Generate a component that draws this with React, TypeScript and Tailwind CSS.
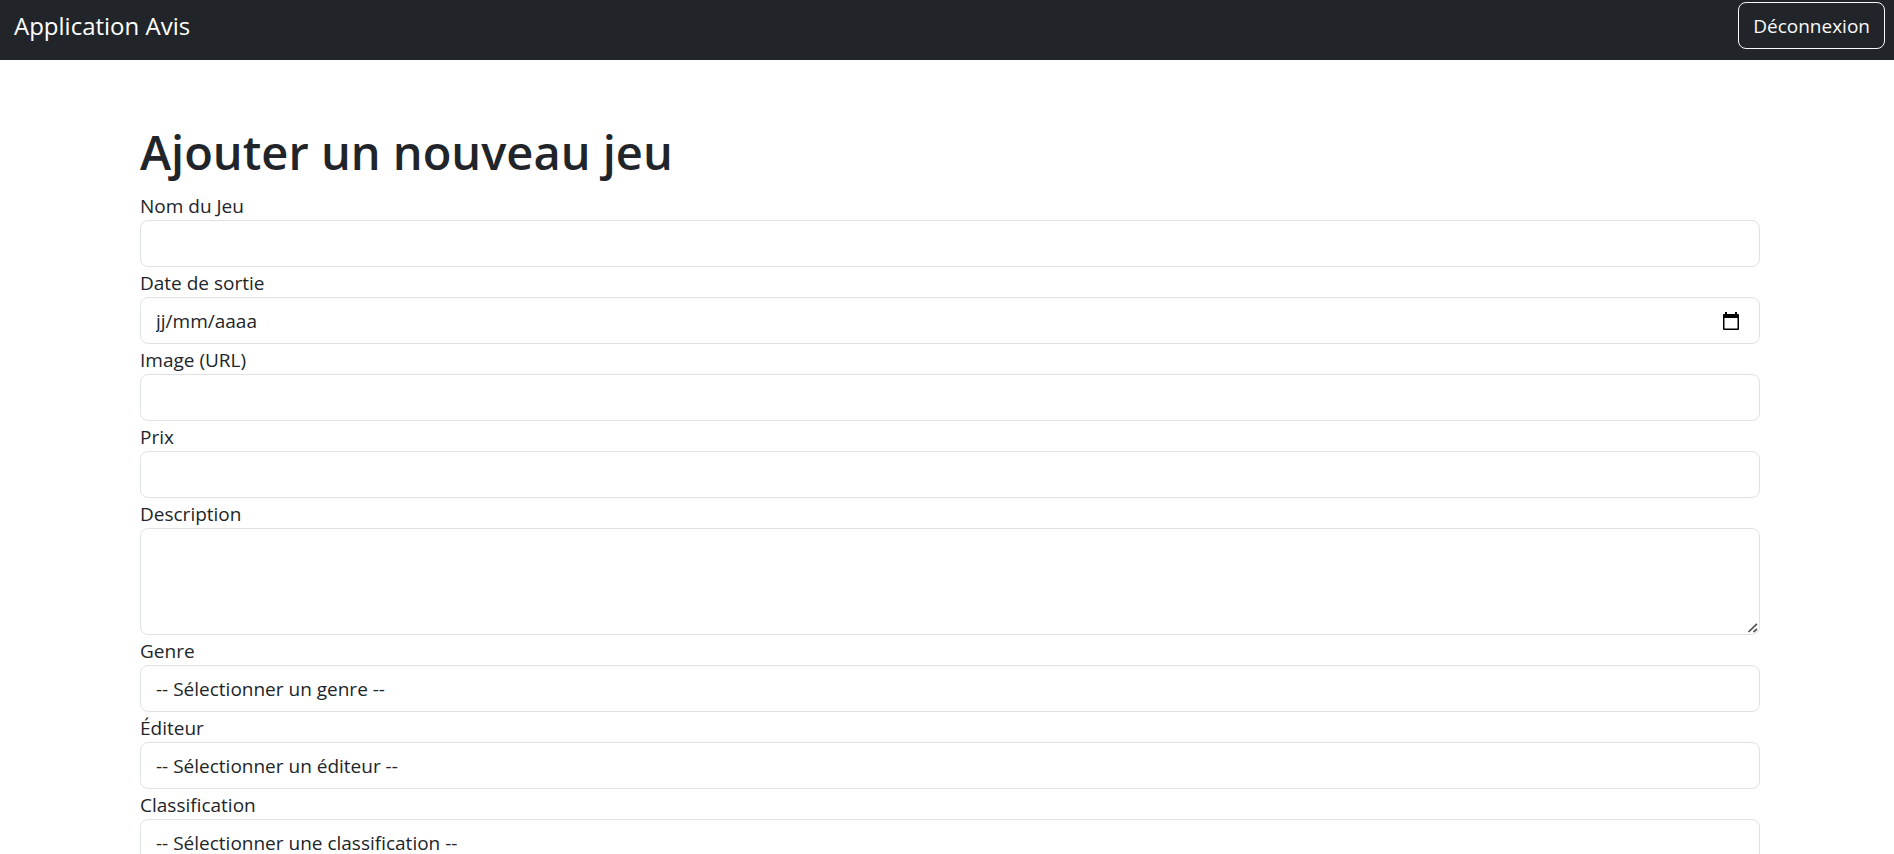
import { useRef, type ReactNode } from "react";

const control =
  "block w-full h-[47px] rounded-lg border border-[#dee2e6] bg-white px-[15px] pt-0.5 text-[19px] text-[#212529]";

function Field({ id, label, children }: { id: string; label: string; children: ReactNode }) {
  return (
    <div>
      <label htmlFor={id} className="block w-fit pt-0.5 text-[19px] leading-[28px]">
        {label}
      </label>
      {children}
    </div>
  );
}

function DateField() {
  const input = useRef<HTMLInputElement>(null);
  return (
    <div className="flex h-[47px] items-center rounded-lg border border-[#dee2e6] pl-[15px] pr-[20px]">
      <input
        ref={input}
        id="date"
        type="text"
        placeholder="jj/mm/aaaa"
        className="min-w-0 grow pt-0.5 text-[19px] outline-none placeholder:text-[#212529]"
      />
      <button type="button" aria-label="Choisir une date" onClick={() => input.current?.focus()}>
        <svg width="16" height="18" viewBox="0 0 16 18" fill="none" className="block">
          <path d="M2 0h2v2h8V0h2v2h1q1 0 1 1v14q0 1-1 1H1q-1 0-1-1V3q0-1 1-1h1zM1.5 6v10.5h13V6z" fill="#000" fillRule="evenodd" />
        </svg>
      </button>
    </div>
  );
}

function Choice({ id, text }: { id: string; text: string }) {
  return (
    <select id={id} className={`${control} appearance-none`} defaultValue="">
      <option value="">{text}</option>
    </select>
  );
}

export default function App() {
  return (
    <div className="h-screen overflow-x-hidden overflow-y-auto bg-white font-['Open_Sans','Noto_Sans',sans-serif] text-[#212529] [scrollbar-width:none]">
      <nav className="flex items-start justify-between bg-[#212529] pb-[10px] pl-[14px] pr-[9px] pt-0.5 text-white">
        <a href="#" className="text-2xl leading-[48px]">
          Application Avis
        </a>
        <button type="button" className="h-[47px] rounded-lg border border-[#f8f9fa] px-[14px] pt-0.5 text-[19px] text-[#f8f9fa]">
          Déconnexion
        </button>
      </nav>
      <main className="mx-auto max-w-[1656px] pb-[60px] pl-[21px] pr-[15px] pt-[60px]">
        <h1 className="mb-[6px] text-[47px] font-semibold leading-[64px]">Ajouter un nouveau jeu</h1>
        <form>
          <Field id="nom" label="Nom du Jeu">
            <input id="nom" type="text" className={control} />
          </Field>
          <Field id="date" label="Date de sortie">
            <DateField />
          </Field>
          <Field id="image" label="Image (URL)">
            <input id="image" type="text" className={control} />
          </Field>
          <Field id="prix" label="Prix">
            <input id="prix" type="text" className={control} />
          </Field>
          <Field id="description" label="Description">
            <div className="relative">
              <textarea
                id="description"
                className="block h-[107px] w-full resize-y rounded-lg border border-[#dee2e6] px-[15px] py-2 text-[19px] [&::-webkit-resizer]:bg-transparent"
              />
              <svg width="10" height="10" viewBox="0 0 10 10" className="pointer-events-none absolute bottom-0.5 right-0.5">
                <path d="M0.5 9L9 0.8M5.5 9L9 6" stroke="#555" strokeWidth="1.7" />
              </svg>
            </div>
          </Field>
          <Field id="genre" label="Genre">
            <Choice id="genre" text="-- Sélectionner un genre --" />
          </Field>
          <Field id="editeur" label="Éditeur">
            <Choice id="editeur" text="-- Sélectionner un éditeur --" />
          </Field>
          <Field id="classification" label="Classification">
            <Choice id="classification" text="-- Sélectionner une classification --" />
          </Field>
        </form>
      </main>
    </div>
  );
}
